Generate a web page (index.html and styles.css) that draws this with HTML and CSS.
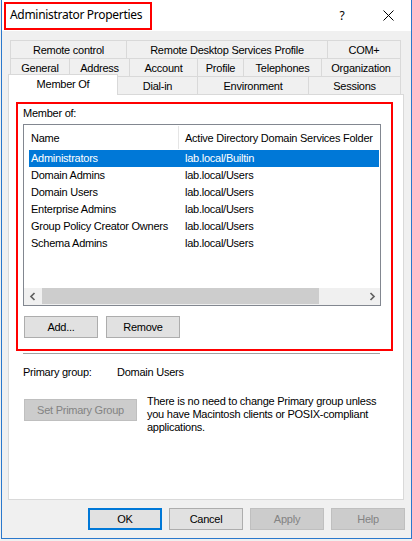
FILE: index.html
```html
<!DOCTYPE html>
<html>
<head>
<meta charset="utf-8">
<link rel="stylesheet" href="styles.css">
</head>
<body>
<div class="window">
  <div class="titlebar">
    <div class="title-mark">Administrator Properties</div>
    <div class="caption">
      <div class="cap-btn">?</div>
      <div class="cap-btn">
        <svg width="11" height="11" viewBox="0 0 11 11"><path d="M0.5 0.5 L10.5 10.5 M10.5 0.5 L0.5 10.5" stroke="#000" stroke-width="1" fill="none"/></svg>
      </div>
    </div>
  </div>
  <div class="main">
    <div class="tabs">
      <div class="tab-row r1">
        <div class="tab first t-remote">Remote control</div>
        <div class="tab t-rds">Remote Desktop Services Profile</div>
        <div class="tab t-com">COM+</div>
      </div>
      <div class="tab-row r2">
        <div class="tab first t-general">General</div>
        <div class="tab t-address">Address</div>
        <div class="tab t-account">Account</div>
        <div class="tab t-profile">Profile</div>
        <div class="tab t-tel">Telephones</div>
        <div class="tab t-org">Organization</div>
      </div>
      <div class="tab-row r3">
        <div class="tab first sel t-member">Member Of</div>
        <div class="tab t-dial">Dial-in</div>
        <div class="tab t-env">Environment</div>
        <div class="tab t-sess">Sessions</div>
      </div>
    </div>
    <div class="panel">
      <div class="member">
        <div class="label">Member of:</div>
        <div class="list">
          <div class="list-head">
            <div class="hcell c1">Name</div>
            <div class="hcell c2">Active Directory Domain Services Folder</div>
          </div>
          <div class="rows">
            <div class="row sel"><span>Administrators</span><span>lab.local/Builtin</span></div>
            <div class="row"><span>Domain Admins</span><span>lab.local/Users</span></div>
            <div class="row"><span>Domain Users</span><span>lab.local/Users</span></div>
            <div class="row"><span>Enterprise Admins</span><span>lab.local/Users</span></div>
            <div class="row"><span>Group Policy Creator Owners</span><span>lab.local/Users</span></div>
            <div class="row"><span>Schema Admins</span><span>lab.local/Users</span></div>
          </div>
          <div class="hscroll">
            <div class="sb-btn"><svg width="8" height="9" viewBox="0 0 8 9"><path d="M5.5 1 L2 4.5 L5.5 8" stroke="#606060" stroke-width="1.7" fill="none"/></svg></div>
            <div class="sb-track"><div class="sb-thumb"></div></div>
            <div class="sb-btn"><svg width="8" height="9" viewBox="0 0 8 9"><path d="M2.5 1 L6 4.5 L2.5 8" stroke="#606060" stroke-width="1.7" fill="none"/></svg></div>
          </div>
        </div>
        <div class="member-actions">
          <button class="btn">Add...</button>
          <button class="btn">Remove</button>
        </div>
      </div>
      <div class="sep"></div>
      <div class="primary">
        <span class="primary-label">Primary group:</span>
        <span>Domain Users</span>
      </div>
      <div class="setrow">
        <button class="btn disabled btn-set">Set Primary Group</button>
        <div class="note">There is no need to change Primary group unless<br>you have Macintosh clients or POSIX-compliant<br>applications.</div>
      </div>
    </div>
    <div class="footer">
      <button class="btn default">OK</button>
      <button class="btn">Cancel</button>
      <button class="btn disabled">Apply</button>
      <button class="btn disabled">Help</button>
    </div>
  </div>
</div>
</body>
</html>
```
FILE: styles.css
```css
* { box-sizing: border-box; }
html, body { margin: 0; background: #f0f0f0; }
body {
  font-family: "Liberation Sans", Arial, sans-serif;
  font-size: 11px;
  letter-spacing: -0.25px;
  color: #000;
}
.window {
  margin-left: 1px;
  width: 411px;
  height: 539px;
  border: 1px solid #2a78cc;
  border-top: none;
  background: #f0f0f0;
  display: flex;
  flex-direction: column;
}
.titlebar {
  height: 31px;
  flex: none;
  background: #fff;
  display: flex;
  align-items: flex-start;
}
.title-mark {
  margin: 2px 0 0 2px;
  width: 148px;
  height: 28px;
  border: 2px solid #f00;
  padding: 3px 0 0 4px;
  font-family: "Noto Sans", "Open Sans", sans-serif;
  font-size: 12px;
  letter-spacing: -0.3px;
  line-height: 16px;
  white-space: nowrap;
}
.caption { margin-left: auto; display: flex; }
.cap-btn {
  width: 46px;
  height: 31px;
  display: flex;
  align-items: center;
  justify-content: center;
  font-family: "Noto Sans", "Open Sans", sans-serif;
  font-size: 12px;
  line-height: 16px;
}
.main {
  flex: 1;
  padding: 9px 7px 8px 6px;
  display: flex;
  flex-direction: column;
}
.tabs { display: flex; flex-direction: column; }
.tab-row { display: flex; height: 18px; }
.r1, .r2 { margin-left: 2px; }
.r3 { margin-top: -2px; height: 20px; align-items: flex-end; }
.tab {
  height: 18px;
  border-top: 1px solid #d9d9d9;
  border-right: 1px solid #d9d9d9;
  background: #f0f0f0;
  text-align: center;
  padding-top: 1px;
  line-height: 16px;
  white-space: nowrap;
}
.tab.first { border-left: 1px solid #d9d9d9; }
.tab.sel {
  height: 21px;
  margin-bottom: -1px;
  background: #fff;
  position: relative;
  z-index: 1;
}
.t-remote { width: 117px; }
.t-rds { width: 201px; }
.t-com { width: 73px; }
.t-general { width: 60px; }
.t-address { width: 60px; }
.t-account { width: 68px; }
.t-profile { width: 46px; }
.t-tel { width: 78px; }
.t-org { width: 79px; }
.t-member { width: 110px; }
.t-dial { width: 80px; }
.t-env { width: 111px; }
.t-sess { width: 92px; }
.panel {
  width: 396px;
  height: 406px;
  flex: none;
  border: 1px solid #d9d9d9;
  background: #fff;
  padding: 7px 0 0 7px;
}
.member {
  width: 377px;
  height: 249px;
  border: 2px solid #f00;
  padding: 3px 0 0 5px;
  display: flex;
  flex-direction: column;
}
.label { line-height: 13px; }
.list {
  margin-top: 4px;
  width: 358px;
  height: 182px;
  flex: none;
  border: 1px solid #828790;
  display: flex;
  flex-direction: column;
}
.list-head {
  height: 25px;
  flex: none;
  display: grid;
  grid-template-columns: 155px 1fr;
  line-height: 13px;
  white-space: nowrap;
  overflow: hidden;
}
.hcell { padding-top: 7px; }
.hcell.c1 {
  padding-left: 7px;
  padding-top: 6px;
  margin: 1px 0;
  border-right: 1px solid #e5e5e5;
}
.hcell.c2 { padding-left: 6px; }
.rows { flex: 1; padding: 0 1px 0 5px; }
.row {
  display: grid;
  grid-template-columns: 154px 1fr;
  height: 17px;
  line-height: 17px;
  white-space: nowrap;
}
.row span { padding-left: 2px; }
.row.sel { background: #0078d7; color: #fff; }
.hscroll {
  height: 17px;
  flex: none;
  display: flex;
  background: #f0f0f0;
}
.sb-btn {
  width: 17px;
  display: flex;
  align-items: center;
  justify-content: center;
}
.sb-track { flex: 1; }
.sb-thumb {
  margin-left: 1px;
  width: 277px;
  height: 16px;
  background: #cdcdcd;
}
.member-actions {
  display: flex;
  gap: 8px;
  margin: 10px 0 0 1px;
}
.btn {
  width: 74px;
  height: 22px;
  padding: 0;
  margin: 0;
  border: 1px solid #adadad;
  background: #e1e1e1;
  font-family: inherit;
  font-size: 11px;
  letter-spacing: -0.25px;
  line-height: 13px;
  color: #000;
}
.btn.default { border: 2px solid #0078d7; }
.btn.disabled {
  background: #cccccc;
  border-color: #bfbfbf;
  color: #838383;
}
.sep {
  margin: 2px 0 0 7px;
  width: 357px;
  height: 1px;
  background: #a0a0a0;
}
.primary {
  margin: 12px 0 0 7px;
  display: flex;
  line-height: 13px;
}
.primary-label { width: 94px; }
.setrow {
  display: flex;
  align-items: flex-start;
  margin: 16px 0 0 8px;
}
.btn-set { width: 113px; margin-top: 4px; flex: none; }
.note {
  margin-left: 10px;
  line-height: 13px;
  white-space: nowrap;
}
.footer {
  display: flex;
  justify-content: flex-end;
  gap: 7px;
  margin: 8px -1px 0 0;
}
```
